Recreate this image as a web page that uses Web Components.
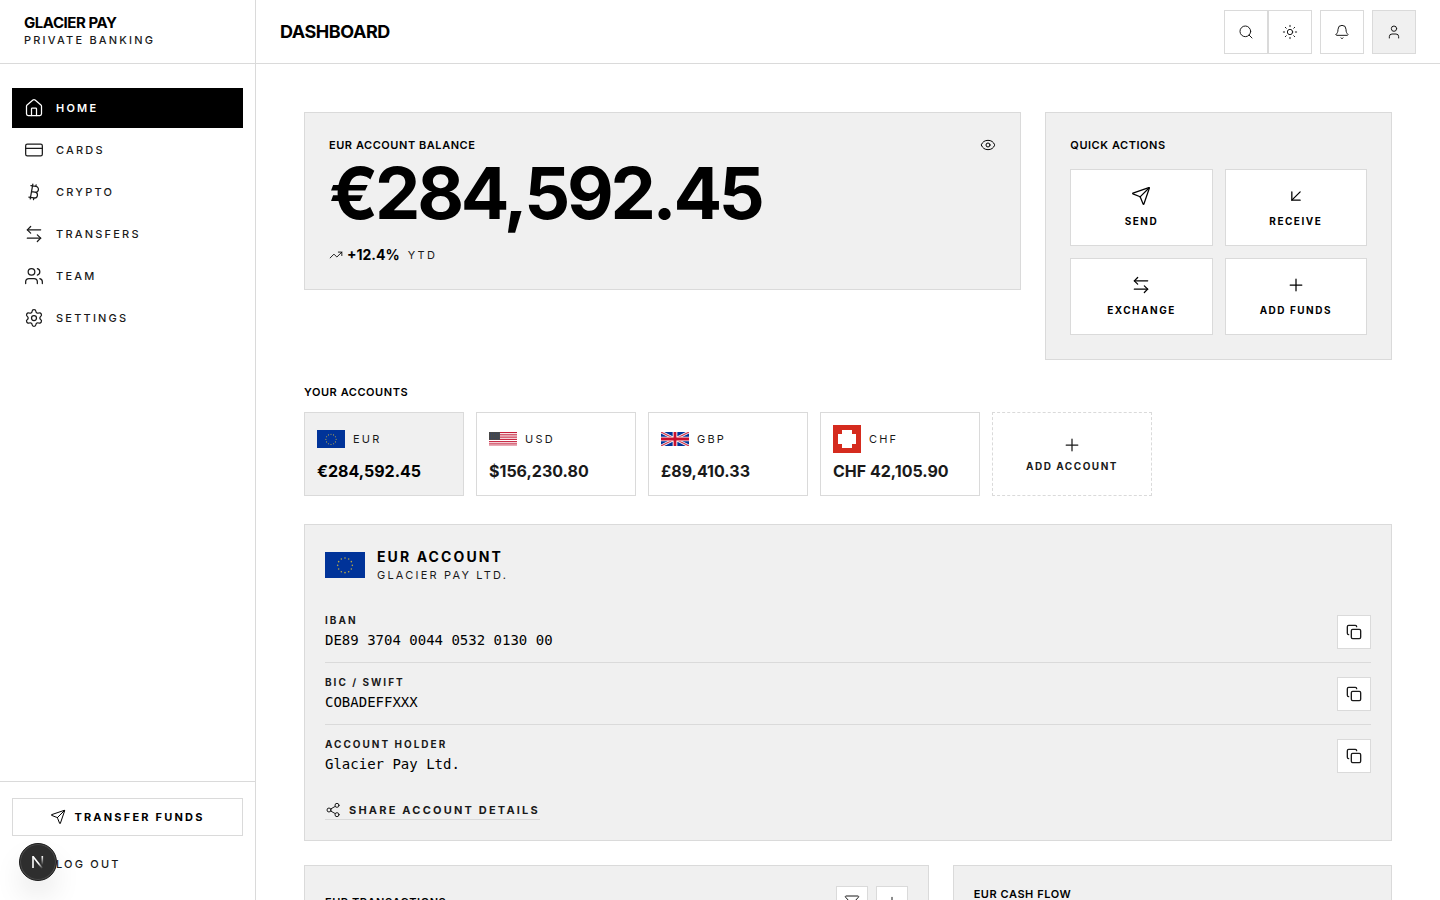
<!DOCTYPE html>
<html lang="en">
<head>
<meta charset="utf-8">
<meta name="viewport" content="width=device-width, initial-scale=1">
<title>Glacier Pay – Dashboard</title>
<style>
  :root {
    --line: #dadada;
    --muted: #f0f0f0;
    --ink: #000;
    --soft: #1a1a1a;
    --page: #fff;
  }
  html, body { margin: 0; height: 100%; }
  body {
    background: var(--page);
    color: var(--ink);
    font-family: Inter, "Liberation Sans", sans-serif;
    font-size: 14px;
    line-height: 20px;
    -webkit-font-smoothing: antialiased;
  }
</style>
</head>
<body>
<gp-app></gp-app>

<script>
const BASE = `
  *, *::before, *::after { box-sizing: border-box; }
  :host([hidden]) { display: none; }
  button { font: inherit; color: inherit; letter-spacing: inherit; margin: 0; cursor: pointer; border-radius: 0; }
  a { color: inherit; text-decoration: none; }
  h1, h2, p, dl, dt, dd { margin: 0; font: inherit; }
  .heading { font-size: 11px; line-height: 16px; font-weight: 600; letter-spacing: 0.05em; }
`;

function define(name, css, html, setup) {
  const template = document.createElement('template');
  customElements.define(name, class extends HTMLElement {
    constructor() {
      super();
      template.innerHTML = `<style>${BASE}${css}</style>${typeof html === 'function' ? html(this) : html}`;
      this.attachShadow({ mode: 'open' }).append(template.content.cloneNode(true));
      if (setup) setup(this, this.shadowRoot);
    }
  });
}

const ICONS = {
  home: '<path d="M15 21v-8a1 1 0 0 0-1-1h-4a1 1 0 0 0-1 1v8"/><path d="M3 10a2 2 0 0 1 .709-1.528l7-5.999a2 2 0 0 1 2.582 0l7 5.999A2 2 0 0 1 21 10v9a2 2 0 0 1-2 2H5a2 2 0 0 1-2-2z"/>',
  card: '<rect x="2" y="5" width="20" height="14" rx="2"/><path d="M2 10h20"/>',
  bitcoin: '<path d="M11.767 19.089c4.924.868 6.14-6.025 1.216-6.894m-1.216 6.894L5.86 18.047m5.908 1.042-.347 1.97m1.563-8.864c4.924.869 6.14-6.025 1.215-6.893m-1.215 6.893-3.94-.694m5.155-6.2L8.29 4.26m5.908 1.042.348-1.97M7.48 20.364l3.126-17.727"/>',
  swap: '<path d="M8 3 4 7l4 4"/><path d="M4 7h16"/><path d="m16 21 4-4-4-4"/><path d="M20 17H4"/>',
  users: '<path d="M16 21v-2a4 4 0 0 0-4-4H6a4 4 0 0 0-4 4v2"/><circle cx="9" cy="7" r="4"/><path d="M22 21v-2a4 4 0 0 0-3-3.87"/><path d="M16 3.128a4 4 0 0 1 0 7.744"/>',
  settings: '<path d="M9.671 4.136a2.34 2.34 0 0 1 4.659 0 2.34 2.34 0 0 0 3.319 1.915 2.34 2.34 0 0 1 2.33 4.033 2.34 2.34 0 0 0 0 3.831 2.34 2.34 0 0 1-2.33 4.033 2.34 2.34 0 0 0-3.319 1.915 2.34 2.34 0 0 1-4.659 0 2.34 2.34 0 0 0-3.32-1.915 2.34 2.34 0 0 1-2.33-4.033 2.34 2.34 0 0 0 0-3.831A2.34 2.34 0 0 1 6.35 6.051a2.34 2.34 0 0 0 3.319-1.915"/><circle cx="12" cy="12" r="3"/>',
  send: '<path d="M14.536 21.686a.5.5 0 0 0 .937-.024l6.5-19a.496.496 0 0 0-.635-.635l-19 6.5a.5.5 0 0 0-.024.937l7.93 3.18a2 2 0 0 1 1.112 1.11z"/><path d="m21.854 2.147-10.94 10.939"/>',
  logout: '<path d="M9 21H5a2 2 0 0 1-2-2V5a2 2 0 0 1 2-2h4"/><path d="m16 17 5-5-5-5"/><path d="M21 12H9"/>',
  search: '<circle cx="11" cy="11" r="8"/><path d="m21 21-4.34-4.34"/>',
  sun: '<circle cx="12" cy="12" r="4"/><path d="M12 2v2M12 20v2M4.93 4.93l1.41 1.41M17.66 17.66l1.41 1.41M2 12h2M20 12h2M6.34 17.66l-1.41 1.41M19.07 4.93l-1.41 1.41"/>',
  bell: '<path d="M10.268 21a2 2 0 0 0 3.464 0"/><path d="M3.262 15.326A1 1 0 0 0 4 17h16a1 1 0 0 0 .74-1.673C19.41 13.956 18 12.499 18 8A6 6 0 0 0 6 8c0 4.499-1.411 5.956-2.738 7.326"/>',
  user: '<path d="M19 21v-2a4 4 0 0 0-4-4H9a4 4 0 0 0-4 4v2"/><circle cx="12" cy="7" r="4"/>',
  eye: '<path d="M2.062 12.348a1 1 0 0 1 0-.696 10.75 10.75 0 0 1 19.876 0 1 1 0 0 1 0 .696 10.75 10.75 0 0 1-19.876 0"/><circle cx="12" cy="12" r="3"/>',
  trend: '<path d="M16 7h6v6"/><path d="m22 7-8.5 8.5-5-5L2 17"/>',
  receive: '<path d="M17 7 7 17"/><path d="M17 17H7V7"/>',
  plus: '<path d="M5 12h14M12 5v14"/>',
  copy: '<rect x="8" y="8" width="14" height="14" rx="2"/><path d="M4 16c-1.1 0-2-.9-2-2V4c0-1.1.9-2 2-2h10c1.1 0 2 .9 2 2"/>',
  share: '<circle cx="18" cy="5" r="3"/><circle cx="6" cy="12" r="3"/><circle cx="18" cy="19" r="3"/><path d="m8.59 13.51 6.83 3.98M15.41 6.51l-6.82 3.98"/>',
  filter: '<path d="M10 20a1 1 0 0 0 .553.895l2 1A1 1 0 0 0 14 21v-7a2 2 0 0 1 .517-1.341L21.74 4.67A1 1 0 0 0 21 3H3a1 1 0 0 0-.742 1.67l7.225 7.989A2 2 0 0 1 10 14z"/>'
};

/* <gp-icon name size weight> */
define('gp-icon', `
  :host { display: block; flex: none; }
  svg { display: block; fill: none; stroke: currentColor; stroke-linecap: round; stroke-linejoin: round; }
`, el => {
  const size = el.getAttribute('size') || 20;
  return `<svg aria-hidden="true" width="${size}" height="${size}" viewBox="0 0 24 24" stroke-width="${el.getAttribute('weight') || 1.5}">${ICONS[el.getAttribute('name')]}</svg>`;
});

const FLAGS = {
  eu: () => {
    let stars = '';
    for (let i = 0; i < 12; i++) {
      const a = i * Math.PI / 6;
      stars += `<circle cx="${(30 + 11 * Math.sin(a)).toFixed(2)}" cy="${(20 - 11 * Math.cos(a)).toFixed(2)}" r="1.2"/>`;
    }
    return `<svg viewBox="0 0 60 40"><rect width="60" height="40" fill="#039"/><g fill="#b8a748">${stars}</g></svg>`;
  },
  us: () => {
    let stripes = '', stars = '';
    for (let i = 0; i < 13; i += 2) stripes += `<rect y="${i * 3}" width="74" height="3"/>`;
    for (let y = 0; y < 4; y++) for (let x = 0; x < 5; x++) stars += `<circle cx="${4 + x * 5.5}" cy="${3.5 + y * 4.7}" r="1.3"/>`;
    return `<svg viewBox="0 0 74 39"><rect width="74" height="39" fill="#fff"/><g fill="#c41e3a">${stripes}</g><rect width="29" height="21" fill="#484848"/><g fill="#26407c">${stars}</g></svg>`;
  },
  gb: () => `<svg viewBox="0 0 60 30"><rect width="60" height="30" fill="#039"/><path d="M0 0 60 30M60 0 0 30" stroke="#fff" stroke-width="6"/><path d="M0 0 60 30M60 0 0 30" stroke="#cf3a50" stroke-width="2.4"/><path d="M30 0v30M0 15h60" stroke="#fff" stroke-width="10"/><path d="M30 0v30M0 15h60" stroke="#c8102e" stroke-width="6"/></svg>`,
  ch: () => `<svg viewBox="0 0 28 28"><rect width="28" height="28" fill="#d52b1e"/><path d="M9 5h10v4h4v10h-4v4H9v-4H5V9h4z" fill="#fff"/></svg>`
};

/* <gp-flag code> – width comes from --flag-width, height from the flag's own ratio */
define('gp-flag', `
  :host { display: block; flex: none; width: var(--flag-width, 28px); }
  svg { display: block; width: 100%; }
`, el => FLAGS[el.getAttribute('code')]());

/* Navigation entry */
define('gp-nav-item', `
  :host { display: block; }
  a { display: flex; align-items: center; gap: 12px; height: 40px; padding: 0 12px; font-size: 11px; line-height: 16px; font-weight: 500; letter-spacing: 0.2em; color: var(--soft); }
  :host([active]) a { background: #000; color: #fff; font-weight: 600; }
`, el => `<a href="#${el.getAttribute('icon')}"${el.hasAttribute('active') ? ' aria-current="page"' : ''}><gp-icon name="${el.getAttribute('icon')}"></gp-icon><slot></slot></a>`);

define('gp-sidebar', `
  :host { display: flex; flex-direction: column; width: 256px; border-right: 1px solid var(--line); background: var(--page); }
  .brand { height: 64px; padding: 14px 24px 0; border-bottom: 1px solid var(--line); }
  .name { font-size: 15px; line-height: 18px; font-weight: 700; letter-spacing: -0.03em; }
  .sub { font-size: 11px; line-height: 16px; font-weight: 500; letter-spacing: 0.2em; color: var(--soft); }
  nav { flex: 1; display: flex; flex-direction: column; gap: 2px; padding: 24px 12px; }
  footer { display: flex; flex-direction: column; gap: 8px; padding: 16px 12px; border-top: 1px solid var(--line); }
  button { display: flex; align-items: center; justify-content: center; gap: 8px; height: 38px; background: var(--page); border: 1px solid var(--line); font-size: 11px; line-height: 16px; font-weight: 700; letter-spacing: 0.2em; }
`, `
  <div class="brand"><p class="name">GLACIER PAY</p><p class="sub">PRIVATE BANKING</p></div>
  <nav aria-label="Main">
    <gp-nav-item icon="home" active>HOME</gp-nav-item>
    <gp-nav-item icon="card">CARDS</gp-nav-item>
    <gp-nav-item icon="bitcoin">CRYPTO</gp-nav-item>
    <gp-nav-item icon="swap">TRANSFERS</gp-nav-item>
    <gp-nav-item icon="users">TEAM</gp-nav-item>
    <gp-nav-item icon="settings">SETTINGS</gp-nav-item>
  </nav>
  <footer>
    <button type="button"><gp-icon name="send" size="16"></gp-icon>TRANSFER FUNDS</button>
    <gp-nav-item icon="logout">LOG OUT</gp-nav-item>
  </footer>
`);

/* Square icon button; its side comes from --side */
define('gp-icon-button', `
  :host { display: block; flex: none; width: var(--side, 44px); height: var(--side, 44px); }
  button { display: grid; place-items: center; width: 100%; height: 100%; padding: 0; background: var(--page); border: 1px solid var(--line); color: var(--soft); }
  :host([filled]) button { background: var(--muted); }
`, el => `<button type="button" aria-label="${el.getAttribute('label')}"><gp-icon name="${el.getAttribute('icon')}" size="16" weight="${el.getAttribute('weight') || 1.5}"></gp-icon></button>`);

define('gp-topbar', `
  :host { display: flex; align-items: center; justify-content: space-between; height: 64px; padding: 0 24px; border-bottom: 1px solid var(--line); background: var(--page); }
  h1 { font-size: 18px; line-height: 28px; font-weight: 700; letter-spacing: -0.025em; }
  .tools, .pair { display: flex; }
  .tools { gap: 8px; }
`, `
  <h1>DASHBOARD</h1>
  <div class="tools">
    <div class="pair">
      <gp-icon-button icon="search" label="Search"></gp-icon-button>
      <gp-icon-button icon="sun" label="Switch theme"></gp-icon-button>
    </div>
    <gp-icon-button icon="bell" label="Notifications"></gp-icon-button>
    <gp-icon-button icon="user" label="Profile" filled></gp-icon-button>
  </div>
`);

define('gp-card', `
  :host { display: block; padding: 24px; background: var(--muted); border: 1px solid var(--line); }
  :host([compact]) { padding: 20px; }
`, `<slot></slot>`);

define('gp-balance', `
  :host { display: block; }
  .top { display: flex; align-items: center; justify-content: space-between; }
  .eye { padding: 0; border: 0; background: none; }
  .amount { margin-top: 4px; font-size: 72px; line-height: 72px; font-weight: 700; letter-spacing: -0.045em; }
  .change { display: flex; align-items: center; gap: 4px; margin-top: 16px; font-weight: 700; }
  .period { margin-left: 4px; font-size: 11px; font-weight: 400; letter-spacing: 0.2em; color: var(--soft); }
`, `
  <gp-card>
    <div class="top"><h2 class="heading">EUR ACCOUNT BALANCE</h2><button class="eye" type="button" aria-label="Hide balance"><gp-icon name="eye" size="16"></gp-icon></button></div>
    <p class="amount">€284,592.45</p>
    <p class="change"><gp-icon name="trend" size="14"></gp-icon><span>+12.4%</span><span class="period">YTD</span></p>
  </gp-card>
`);

define('gp-action', `
  :host { display: block; }
  button { display: flex; flex-direction: column; align-items: center; gap: 8px; width: 100%; padding: 16px 8px; background: var(--page); border: 1px solid var(--line); font-size: 10px; line-height: 15px; font-weight: 700; letter-spacing: 0.15em; }
`, el => `<button type="button"><gp-icon name="${el.getAttribute('icon')}"></gp-icon><span><slot></slot></span></button>`);

define('gp-quick-actions', `
  :host { display: block; }
  .grid { display: grid; grid-template-columns: 1fr 1fr; gap: 12px; margin-top: 16px; }
`, `
  <gp-card>
    <h2 class="heading">QUICK ACTIONS</h2>
    <div class="grid">
      <gp-action icon="send">SEND</gp-action>
      <gp-action icon="receive">RECEIVE</gp-action>
      <gp-action icon="swap">EXCHANGE</gp-action>
      <gp-action icon="plus">ADD FUNDS</gp-action>
    </div>
  </gp-card>
`);

/* Account tile */
define('gp-account', `
  :host { display: block; flex: none; width: 160px; }
  button { display: flex; flex-direction: column; gap: 6px; width: 100%; height: 84px; padding: 12px; background: var(--page); border: 1px solid var(--line); color: var(--soft); text-align: left; }
  :host([active]) button { background: var(--muted); color: var(--ink); }
  .row { display: flex; align-items: center; gap: 8px; height: 28px; font-size: 11px; line-height: 16px; letter-spacing: 0.2em; color: var(--soft); }
  .amount { font-size: 16px; line-height: 24px; font-weight: 700; }
`, el => `<button type="button" aria-pressed="${el.hasAttribute('active')}"><span class="row"><gp-flag code="${el.getAttribute('flag')}"></gp-flag>${el.getAttribute('currency')}</span><span class="amount"><slot></slot></span></button>`);

define('gp-add-account', `
  :host { display: block; flex: none; width: 160px; }
  button { display: flex; flex-direction: column; align-items: center; justify-content: center; gap: 4px; width: 100%; height: 84px; padding: 0; background: none; border: 1px dashed var(--line); color: var(--soft); font-size: 10px; line-height: 15px; font-weight: 700; letter-spacing: 0.15em; }
`, `<button type="button"><gp-icon name="plus"></gp-icon>ADD ACCOUNT</button>`);

define('gp-accounts', `
  :host { display: block; }
  .list { display: flex; gap: 12px; margin-top: 12px; padding-bottom: 4px; overflow-x: auto; scrollbar-width: none; }
`, `
  <h2 class="heading">YOUR ACCOUNTS</h2>
  <div class="list">
    <gp-account flag="eu" currency="EUR" active>€284,592.45</gp-account>
    <gp-account flag="us" currency="USD">$156,230.80</gp-account>
    <gp-account flag="gb" currency="GBP">£89,410.33</gp-account>
    <gp-account flag="ch" currency="CHF">CHF 42,105.90</gp-account>
    <gp-add-account></gp-add-account>
  </div>
`);

/* Label and value with a copy button */
define('gp-detail', `
  :host { display: flex; align-items: center; justify-content: space-between; padding: 12px 0; border-bottom: 1px solid var(--line); }
  :host(:last-of-type) { border-bottom: 0; }
  .label { font-size: 10px; line-height: 15px; font-weight: 700; letter-spacing: 0.2em; color: var(--soft); }
  .value { margin-top: 2px; font-family: "DejaVu Sans Mono", monospace; font-size: 14px; line-height: 20px; }
  gp-icon-button { --side: 34px; }
`, el => `<div><p class="label">${el.getAttribute('label')}</p><p class="value"><slot></slot></p></div><gp-icon-button icon="copy" weight="2" label="Copy ${el.getAttribute('label')}"></gp-icon-button>`);

define('gp-account-details', `
  :host { display: block; }
  header { display: flex; align-items: center; gap: 12px; height: 40px; margin-bottom: 16px; --flag-width: 40px; }
  .title { font-size: 14px; line-height: 20px; font-weight: 700; letter-spacing: 0.15em; }
  .owner { font-size: 11px; line-height: 16px; letter-spacing: 0.2em; color: var(--soft); }
  .share { display: flex; align-items: center; gap: 8px; width: fit-content; margin-top: 16px; padding-bottom: 1px; border-bottom: 1px solid var(--line); font-size: 11px; line-height: 16px; font-weight: 700; letter-spacing: 0.2em; color: var(--soft); }
`, `
  <gp-card compact>
    <header><gp-flag code="eu"></gp-flag><div><h2 class="title">EUR ACCOUNT</h2><p class="owner">GLACIER PAY LTD.</p></div></header>
    <div>
      <gp-detail label="IBAN">DE89 3704 0044 0532 0130 00</gp-detail>
      <gp-detail label="BIC / SWIFT">COBADEFFXXX</gp-detail>
      <gp-detail label="ACCOUNT HOLDER">Glacier Pay Ltd.</gp-detail>
    </div>
    <a class="share" href="#share"><gp-icon name="share" size="16"></gp-icon>SHARE ACCOUNT DETAILS</a>
  </gp-card>
`);

define('gp-transactions', `
  :host { display: block; }
  header, .tools { display: flex; align-items: center; gap: 8px; }
  header { justify-content: space-between; }
  gp-icon-button { --side: 32px; }
`, `
  <gp-card compact>
    <header><h2 class="heading">EUR TRANSACTIONS</h2><div class="tools"><gp-icon-button icon="filter" label="Filter"></gp-icon-button><gp-icon-button icon="plus" label="Add"></gp-icon-button></div></header>
  </gp-card>
`);

define('gp-cash-flow', `
  :host { display: grid; }
`, `<gp-card compact><h2 class="heading">EUR CASH FLOW</h2></gp-card>`);

/* Round developer badge floating over the lower left corner */
define('gp-badge', `
  :host { position: absolute; left: 19px; bottom: 19px; width: 38px; height: 38px; }
  button { display: grid; place-items: center; width: 100%; height: 100%; padding: 0; border: 1px solid #1c1c1c; border-radius: 50%; background: #2e2e2e; box-shadow: inset 0 0 0 1px #4a4a4a, 0 16px 32px -8px rgba(0, 0, 0, 0.24); }
  svg { display: block; }
`, `
  <button type="button" aria-label="Developer tools">
    <svg width="14" height="14" viewBox="0 0 14 14" fill="none" stroke-width="1.6" aria-hidden="true">
      <defs>
        <linearGradient id="a" gradientUnits="userSpaceOnUse" x1="8" y1="8" x2="12" y2="13"><stop stop-color="#fff"/><stop offset="1" stop-color="#fff" stop-opacity="0"/></linearGradient>
        <linearGradient id="b" gradientUnits="userSpaceOnUse" x1="11" y1="1" x2="11" y2="10"><stop stop-color="#fff"/><stop offset="1" stop-color="#fff" stop-opacity="0"/></linearGradient>
      </defs>
      <path d="M2 13V1" stroke="#fff"/><path d="M2 1.5 11.500 13.500" stroke="url(#a)"/><path d="M11.300 1v9" stroke="url(#b)"/>
    </svg>
  </button>
`);

define('gp-app', `
  :host { display: grid; grid-template-columns: auto minmax(0, 1fr); height: 100vh; overflow: hidden; position: relative; }
  .body { display: flex; flex-direction: column; min-width: 0; min-height: 0; }
  gp-topbar { flex: none; }
  main { flex: 1; min-height: 0; overflow-y: auto; scrollbar-width: none; padding: 48px; }
  .stack { display: flex; flex-direction: column; gap: 24px; }
  .top { display: grid; grid-template-columns: repeat(3, minmax(0, 1fr)); gap: 24px; align-items: start; }
  .top gp-balance { grid-column: span 2; }
  .bottom { display: grid; grid-template-columns: repeat(12, minmax(0, 1fr)); gap: 24px; }
  .bottom gp-transactions { grid-column: span 7; }
  .bottom gp-cash-flow { grid-column: span 5; }
`, `
  <gp-sidebar></gp-sidebar>
  <div class="body">
    <gp-topbar></gp-topbar>
    <main>
      <div class="stack">
        <div class="top"><gp-balance></gp-balance><gp-quick-actions></gp-quick-actions></div>
        <gp-accounts></gp-accounts>
        <gp-account-details></gp-account-details>
        <div class="bottom"><gp-transactions></gp-transactions><gp-cash-flow></gp-cash-flow></div>
      </div>
    </main>
  </div>
  <gp-badge></gp-badge>
`);
</script>
</body>
</html>
